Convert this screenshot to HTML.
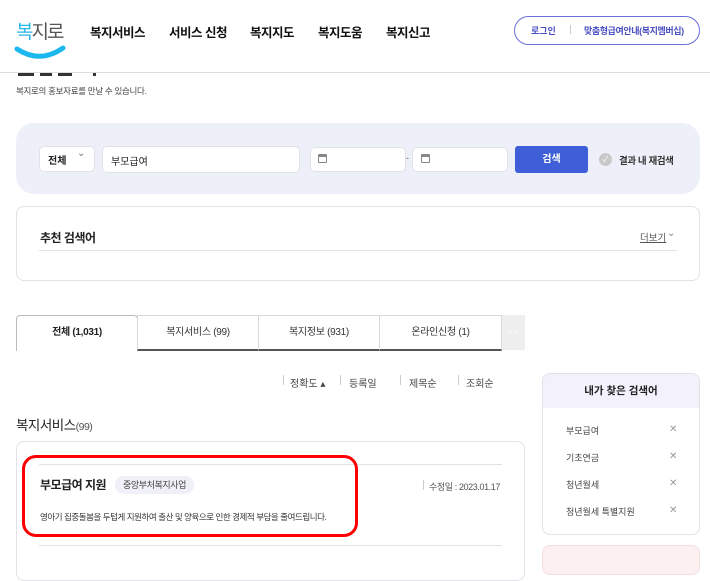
<!DOCTYPE html>
<html><head><meta charset="utf-8"><style>
*{margin:0;padding:0;box-sizing:border-box}
body{width:710px;height:563px;overflow:hidden;background:#fff;font-family:"Liberation Sans","Noto Sans CJK KR",sans-serif;color:#222;position:relative}
.a{position:absolute;white-space:nowrap}
.nav{font-size:12.5px;font-weight:bold;top:22px;color:#111;letter-spacing:-0.5px}
.box{position:absolute;background:#fff;border:1px solid #e2e2e6;border-radius:5px}
.tab{position:absolute;top:315px;height:36px;border:1px solid #d8d8d8;border-bottom:2px solid #555;font-size:10px;text-align:center;line-height:34px;color:#333;background:#fff;letter-spacing:-0.3px}
.si{font-size:9px;color:#444;left:566px}
.x{left:669px;font-size:10px;color:#999}
</style></head><body>
<!-- header -->
<div class="a" style="left:16px;top:17px;font-size:19px;color:#29b6e8;letter-spacing:-2px">복<span style="color:#555">지로</span></div>
<svg class="a" style="left:14px;top:44px" width="52" height="18"><path d="M3 5 Q26 20 49 4" stroke="#1ab8ef" stroke-width="5" fill="none" stroke-linecap="round"/></svg>
<div class="a nav" style="left:90px">복지서비스</div>
<div class="a nav" style="left:169px">서비스 신청</div>
<div class="a nav" style="left:250px">복지지도</div>
<div class="a nav" style="left:318px">복지도움</div>
<div class="a nav" style="left:386px">복지신고</div>
<div class="a" style="left:514px;top:16px;width:186px;height:29px;border:1px solid #6b6fd6;border-radius:15px"></div>
<div class="a" style="left:531px;top:24px;font-size:9px;color:#4a4fc0;font-weight:bold">로그인</div>
<div class="a" style="left:570px;top:25px;width:1px;height:9px;background:#ccc"></div>
<div class="a" style="left:584px;top:24px;font-size:9px;color:#4a4fc0;font-weight:bold;letter-spacing:-0.4px">맞춤형급여안내(복지멤버십)</div>
<div class="a" style="left:0;top:72px;width:710px;height:1px;background:#ddd"></div>
<div class="a" style="left:18px;top:73px;width:16px;height:3px;background:#333"></div>
<div class="a" style="left:40px;top:73px;width:12px;height:3px;background:#333"></div>
<div class="a" style="left:58px;top:73px;width:14px;height:3px;background:#333"></div>
<div class="a" style="left:93px;top:73px;width:3px;height:3px;background:#333"></div>
<div class="a" style="left:16px;top:85px;font-size:8.5px;color:#444;letter-spacing:-0.3px">복지로의 홍보자료를 만날 수 있습니다.</div>
<!-- search -->
<div class="a" style="left:16px;top:123px;width:684px;height:71px;background:#eef0f9;border-radius:18px"></div>
<div class="box" style="left:39px;top:146px;width:56px;height:26px"></div>
<div class="a" style="left:48px;top:152px;font-size:10px;font-weight:bold">전체</div>
<div class="a" style="left:77px;top:148px;font-size:10px;color:#777">⌄</div>
<div class="box" style="left:102px;top:146px;width:198px;height:27px"></div>
<div class="a" style="left:111px;top:153px;font-size:10px">부모급여</div>
<div class="box" style="left:310px;top:147px;width:96px;height:25px"></div>
<div class="box" style="left:412px;top:147px;width:96px;height:25px"></div>
<div class="a" style="left:318px;top:154px;width:9px;height:9px;border:1px solid #888;border-top-width:3px;border-radius:1px"></div>
<div class="a" style="left:421px;top:154px;width:9px;height:9px;border:1px solid #888;border-top-width:3px;border-radius:1px"></div>
<div class="a" style="left:406px;top:153px;font-size:9px;color:#666">-</div>
<div class="a" style="left:515px;top:146px;width:73px;height:27px;background:#3e5fd8;border-radius:3px;color:#fff;font-size:10px;font-weight:bold;text-align:center;line-height:27px">검색</div>
<div class="a" style="left:599px;top:153px;width:13px;height:13px;border-radius:50%;background:#c8c8c8;color:#fff;font-size:8px;text-align:center;line-height:13px">✓</div>
<div class="a" style="left:619px;top:153px;font-size:9.5px;font-weight:bold;color:#333;letter-spacing:-0.4px">결과 내 재검색</div>
<!-- recommend -->
<div class="a" style="left:16px;top:206px;width:684px;height:75px;border:1px solid #e2e2e6;border-radius:8px"></div>
<div class="a" style="left:40px;top:229px;font-size:12px;font-weight:bold;letter-spacing:-0.5px">추천 검색어</div>
<div class="a" style="left:39px;top:250px;width:638px;height:1px;background:#e2e2e2"></div>
<div class="a" style="left:640px;top:230px;font-size:9.5px;color:#555;text-decoration:underline">더보기</div>
<div class="a" style="left:667px;top:228px;font-size:10px;color:#888">⌄</div>
<!-- tabs -->
<div class="tab" style="left:16px;width:122px;border-bottom:0;font-weight:bold;color:#222;border-color:#bbb;border-radius:4px 4px 0 0;height:36px">전체 (1,031)</div>
<div class="tab" style="left:137px;width:122px">복지서비스 (99)</div>
<div class="tab" style="left:258px;width:122px">복지정보 (931)</div>
<div class="tab" style="left:379px;width:123px">온라인신청 (1)</div>
<div class="a" style="left:502px;top:315px;width:23px;height:35px;background:#eee;color:#fff;font-size:10px;text-align:center;line-height:35px">‹ ›</div>
<!-- sort -->
<div class="a" style="left:283px;top:375px;width:1px;height:10px;background:#ccc"></div>
<div class="a" style="left:290px;top:375px;font-size:10px;color:#444">정확도 ▴</div>
<div class="a" style="left:340px;top:375px;width:1px;height:10px;background:#ccc"></div>
<div class="a" style="left:349px;top:375px;font-size:10px;color:#444">등록일</div>
<div class="a" style="left:400px;top:375px;width:1px;height:10px;background:#ccc"></div>
<div class="a" style="left:409px;top:375px;font-size:10px;color:#444">제목순</div>
<div class="a" style="left:458px;top:375px;width:1px;height:10px;background:#ccc"></div>
<div class="a" style="left:466px;top:375px;font-size:10px;color:#444">조회순</div>
<div class="a" style="left:16px;top:414px;font-size:13.5px;color:#222;letter-spacing:-0.5px">복지서비스<span style="font-size:10.5px;color:#555">(99)</span></div>
<!-- card -->
<div class="a" style="left:16px;top:441px;width:509px;height:140px;border:1px solid #e2e2e6;border-radius:8px"></div>
<div class="a" style="left:39px;top:464px;width:463px;height:1px;background:#e2e2e2"></div>
<div class="a" style="left:39px;top:545px;width:463px;height:1px;background:#e2e2e2"></div>
<div class="a" style="left:40px;top:476px;font-size:12px;font-weight:bold;letter-spacing:-0.5px">부모급여 지원</div>
<div class="a" style="left:115px;top:476px;width:79px;height:18px;background:#f0f0f8;border-radius:9px;font-size:9px;color:#444;text-align:center;line-height:18px;letter-spacing:-0.4px">중앙부처복지사업</div>
<div class="a" style="left:423px;top:480px;width:1px;height:10px;background:#ccc"></div>
<div class="a" style="left:429px;top:480px;font-size:9px;color:#555;letter-spacing:-0.4px">수정일 : 2023.01.17</div>
<div class="a" style="left:40px;top:511px;font-size:8.5px;color:#333;letter-spacing:-0.45px">영아기 집중돌봄을 두텁게 지원하여 출산 및 양육으로 인한 경제적 부담을 줄여드립니다.</div>
<div class="a" style="left:22px;top:455px;width:336px;height:82px;border:3.5px solid #f00;border-radius:14px"></div>
<!-- sidebar -->
<div class="a" style="left:542px;top:373px;width:158px;height:162px;border:1px solid #e2e2e6;border-radius:8px;overflow:hidden"><div style="height:34px;background:#f3f2fc;text-align:center;line-height:34px;font-size:10.5px;font-weight:bold">내가 찾은 검색어</div></div>
<div class="a si" style="top:424px">부모급여</div><div class="a x" style="top:424px">✕</div>
<div class="a si" style="top:451px">기초연금</div><div class="a x" style="top:451px">✕</div>
<div class="a si" style="top:478px">청년월세</div><div class="a x" style="top:478px">✕</div>
<div class="a si" style="top:505px">청년월세 특별지원</div><div class="a x" style="top:505px">✕</div>
<div class="a" style="left:542px;top:545px;width:158px;height:30px;background:#fdf0f0;border:1px solid #f3dede;border-radius:8px"></div>
</body></html>
